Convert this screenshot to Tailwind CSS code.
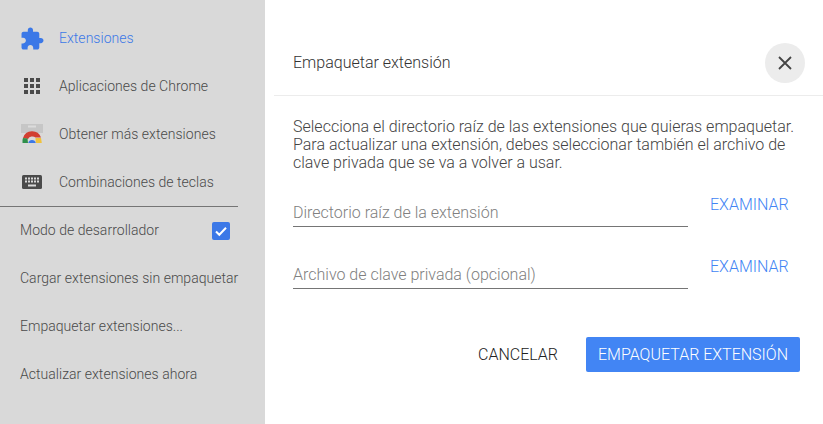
<!DOCTYPE html>
<html lang="es">
<head>
  <meta charset="UTF-8">
  <title>Empaquetar extensión</title>
  <script src="https://cdn.jsdelivr.net/npm/@tailwindcss/browser@4"></script>
</head>
<body class="h-[424px] w-[823px] overflow-hidden bg-white flex font-['Roboto',sans-serif] font-light text-[14px]">

  <!-- Sidebar -->
  <aside class="w-[265px] h-full bg-[#d9d9d9] text-[#4a4a4a] shrink-0 pt-[14px] tracking-[0.03px]">
    <nav class="w-[238px] border-b border-[#757575] h-[193px]">
      <a class="flex items-center h-[48px] text-[#3b78e7]">
        <span class="w-[59px] pl-[21px] shrink-0">
          <svg class="block" width="23" height="23" viewBox="1.5 0.5 22 22" fill="#3b78e7"><path d="M20.5 11H19V7c0-1.1-.9-2-2-2h-4V3.5C13 2.12 11.88 1 10.5 1S8 2.12 8 3.5V5H4c-1.1 0-1.99.9-1.99 2v3.8H3.5c1.49 0 2.7 1.21 2.7 2.7s-1.21 2.7-2.7 2.7H2V20c0 1.1.9 2 2 2h3.8v-1.5c0-1.49 1.21-2.7 2.7-2.7s2.7 1.21 2.7 2.7V22H17c1.1 0 2-.9 2-2v-4h1.5c1.38 0 2.5-1.12 2.5-2.5S21.88 11 20.5 11z"/></svg>
        </span>
        <span>Extensiones</span>
      </a>
      <a class="flex items-center h-[48px]">
        <span class="w-[59px] pl-[24px] shrink-0">
          <svg class="block" width="16" height="16" viewBox="0 0 16 16" fill="#4a4a4a"><path d="M0 0h4v4H0zM6 0h4v4H6zM12 0h4v4h-4zM0 6h4v4H0zM6 6h4v4H6zM12 6h4v4h-4zM0 12h4v4H0zM6 12h4v4H6zM12 12h4v4h-4z"/></svg>
        </span>
        <span>Aplicaciones de Chrome</span>
      </a>
      <a class="flex items-center h-[48px]">
        <span class="w-[59px] pl-[21px] shrink-0">
          <svg class="block" width="22" height="20" viewBox="0 0 22 20">
            <rect width="22" height="9" fill="#c6c6c6"/>
            <rect x="7" y="1.5" width="8" height="2" fill="#dcdcdc"/>
            <rect y="9" width="22" height="2" fill="#d9d9d9"/>
            <path d="M2 14 A9.5 9.5 0 0 1 20 13.5 L14.5 13.5 A5 5 0 0 0 7 15 Z" fill="#d23f31"/>
            <path d="M2 14 L6.5 14.5 L7 19 H1.5 A9 9 0 0 1 2 14Z" fill="#2f8f4a"/>
            <path d="M14.5 14 H20 L20.8 19 H14.8Z" fill="#f0c23c"/>
            <path d="M7.2 19 A3.9 3.9 0 0 1 14.8 19Z" fill="#3b78e7"/>
          </svg>
        </span>
        <span>Obtener más extensiones</span>
      </a>
      <a class="flex items-center h-[48px]">
        <span class="w-[59px] pl-[22px] shrink-0">
          <svg class="block" width="20" height="14" viewBox="0 0 20 14">
            <rect width="20" height="14" rx="1.5" fill="#4a4a4a"/>
            <path fill="#d9d9d9" d="M3 2.5h2v2H3zM6 2.5h2v2H6zM9 2.5h2v2H9zM12 2.5h2v2h-2zM15 2.5h2v2h-2zM3 5.5h2v2H3zM6 5.5h2v2H6zM9 5.5h2v2H9zM12 5.5h2v2h-2zM15 5.5h2v2h-2zM6 9.5h8v2H6z"/>
          </svg>
        </span>
        <span>Combinaciones de teclas</span>
      </a>
    </nav>
    <div class="pl-[20px] w-[265px] -mt-px">
      <div class="flex items-center h-[48px] whitespace-nowrap">
        <span class="w-[192px]">Modo de desarrollador</span>
        <span class="w-[18px] h-[18px] mt-[2px] rounded-[2px] bg-[#3b78e7] flex items-center justify-center">
          <svg width="14" height="14" viewBox="0 0 14 14" fill="none" stroke="#fff" stroke-width="2"><path d="M2 7.5l3.3 3.3L12 3.8"/></svg>
        </span>
      </div>
      <div class="flex items-center h-[48px] whitespace-nowrap">Cargar extensiones sin empaquetar</div>
      <div class="flex items-center h-[48px] whitespace-nowrap">Empaquetar extensiones...</div>
      <div class="flex items-center h-[48px] whitespace-nowrap">Actualizar extensiones ahora</div>
    </div>
  </aside>

  <!-- Dialog -->
  <main class="flex-1 pl-[9px] pt-[43px]">
    <header class="h-[53px] border-b border-[#ececec] flex items-start justify-between pl-[19px] pr-[18px]">
      <h1 class="text-[16px] font-light text-[#333] leading-[40px]">Empaquetar extensión</h1>
      <button class="w-[40px] h-[40px] mr-[3px] rounded-full bg-[#ececec] flex items-center justify-center">
        <svg width="14" height="14" viewBox="0 0 14 14" stroke="#444" stroke-width="1.8"><path d="M1 1l12 12M13 1L1 13"/></svg>
      </button>
    </header>
    <div class="pl-[19px] pr-[23px]">
      <p class="pt-[22px] text-[16px] leading-[18px] text-[#444] w-[510px]">Selecciona el directorio raíz de las extensiones que quieras empaquetar. Para actualizar una extensión, debes seleccionar también el archivo de clave privada que se va a volver a usar.</p>

      <div class="flex items-start mt-[13px]">
        <div class="w-[395px] h-[42px] border-b border-[#757575] pt-[18px] text-[16px] leading-[20px] text-[#808080]">Directorio raíz de la extensión</div>
        <a class="ml-[22px] text-[16px] leading-[20px] mt-[10px] text-[#4285f4]">EXAMINAR</a>
      </div>
      <div class="flex items-start mt-[20px]">
        <div class="w-[395px] h-[42px] border-b border-[#757575] pt-[18px] text-[16px] leading-[20px] text-[#808080]">Archivo de clave privada (opcional)</div>
        <a class="ml-[22px] text-[16px] leading-[20px] mt-[10px] text-[#4285f4]">EXAMINAR</a>
      </div>

      <div class="flex items-center justify-end mt-[48px] w-[507px]">
        <button class="text-[16px] font-light text-[#222] mr-[28px]">CANCELAR</button>
        <button class="w-[214px] h-[35px] rounded-[2px] bg-[#4285f4] text-white text-[16px] font-light">EMPAQUETAR EXTENSIÓN</button>
      </div>
    </div>
  </main>
</body>
</html>
